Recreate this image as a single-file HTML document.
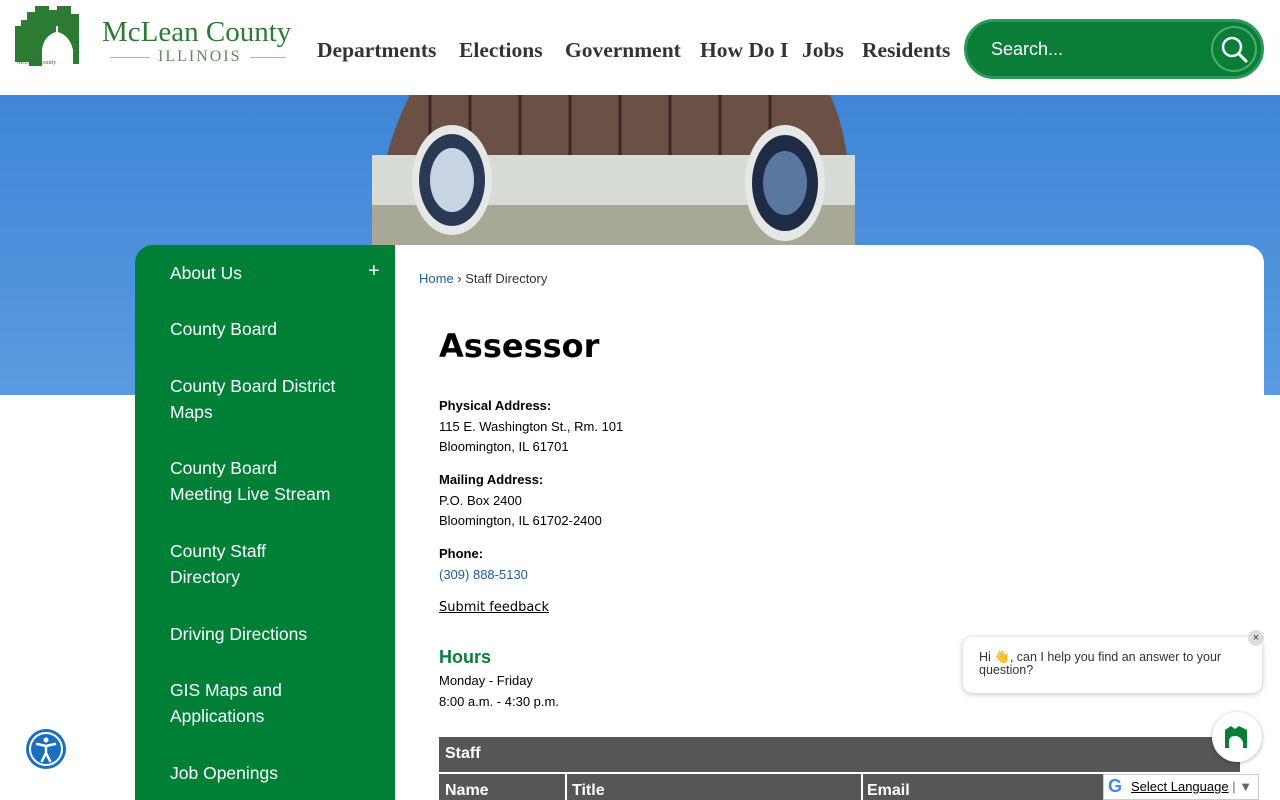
<!DOCTYPE html>
<html><head><meta charset="utf-8"><style>
*{margin:0;padding:0;box-sizing:border-box}
html,body{width:1280px;height:800px;overflow:hidden}
body{background:#fff;font-family:"Liberation Sans",sans-serif;position:relative}
.hdr{position:absolute;top:0;left:0;width:1280px;height:95px;background:#fff}
.nav{position:absolute;top:38px;left:317px;font-family:"Liberation Serif",serif;font-weight:bold;font-size:21.5px;color:#333;white-space:nowrap}
.nav span{position:absolute;top:0}
.search{position:absolute;left:964px;top:19px;width:300px;height:60px;border-radius:30px;background:#0a7d38;border:3px solid #2a9a55}
.search .t{position:absolute;left:24px;top:17px;color:#fff;font-size:18px}
.search .b{position:absolute;right:4px;top:4px;width:46px;height:46px;border-radius:50%;background:#0a7d38;border:2px solid #4caf70}
.hero{position:absolute;top:95px;left:0;width:1280px;height:300px;background:linear-gradient(180deg,#3f86d8,#5a9be0)}
.side{position:absolute;left:135px;top:245px;width:260px;height:560px;background:#008037;border-radius:18px 0 0 0;color:#fff;font-size:17.5px}
.side div{position:absolute;left:35px;line-height:26px}
.main{position:absolute;left:395px;top:245px;width:869px;height:560px;background:#fff;border-radius:0 18px 0 0}
.sm{font-size:13px;color:#000;line-height:20.5px}
a{color:#1a5fa0}
</style></head><body>
<div class="hdr">
<svg style="position:absolute;left:15px;top:6px" width="78" height="62" viewBox="0 0 78 62">
<path d="M0 20h6v-6h6v-8h8V0h14v4h8v-4h14v8h8v50h-6V44c-2-10-8-16-15-18v-6h-2v6c-8 2-14 10-14 20v14H14v-4H0z" fill="#2d7a33"/>
<text x="2" y="58" font-size="6" font-family="Liberation Serif" fill="#2d7a33">McLean County</text>
</svg>
<div style="position:absolute;left:102px;top:16px;font-family:'Liberation Serif',serif;font-size:29px;color:#2d7a33">McLean County</div>
<div style="position:absolute;left:110px;top:57px;width:176px;border-top:1px solid #9bb;"></div>
<div style="position:absolute;left:150px;top:48px;background:#fff;padding:0 8px;font-family:'Liberation Serif',serif;font-size:16px;letter-spacing:2px;color:#5b8c5f">ILLINOIS</div>
<div class="nav"><span style="left:0">Departments</span><span style="left:142px">Elections</span><span style="left:248px">Government</span><span style="left:383px">How Do I</span><span style="left:485px">Jobs</span><span style="left:545px">Residents</span></div>
<div class="search"><div class="t">Search...</div><div class="b"><svg width="42" height="42" viewBox="0 0 42 42"><circle cx="19" cy="19" r="9" fill="none" stroke="#fff" stroke-width="2.5"/><path d="M26 26l7 7" stroke="#fff" stroke-width="3" stroke-linecap="round"/></svg></div></div>
</div>
<div class="hero">
<svg width="1280" height="300" style="position:absolute;left:0;top:0">
<path d="M372 150C380 60 400 20 410 0H830C845 30 852 80 855 150z" fill="#6b5046"/>
<path d="M430 0v120M470 0v120M520 0v110M570 0v110M620 0v110M670 0v110M720 0v110M770 0v120" stroke="#3a2822" stroke-width="3"/>
<rect x="372" y="60" width="483" height="90" fill="#d8dcd6"/>
<rect x="372" y="110" width="483" height="40" fill="#a8a896"/>
<ellipse cx="452" cy="85" rx="40" ry="55" fill="#e5e8e4"/><ellipse cx="452" cy="85" rx="33" ry="46" fill="#2a3a55"/><ellipse cx="452" cy="85" rx="22" ry="32" fill="#c8d4e4"/>
<ellipse cx="785" cy="88" rx="40" ry="58" fill="#e5e8e4"/><ellipse cx="785" cy="88" rx="33" ry="48" fill="#1d2b44"/><ellipse cx="785" cy="88" rx="22" ry="32" fill="#5878a0"/>
</svg>
</div>
<div class="side">
<div style="top:15px">About Us</div><div style="top:13px;left:233px;font-size:20px">+</div>
<div style="top:71px">County Board</div>
<div style="top:128px">County Board District<br>Maps</div>
<div style="top:210px">County Board<br>Meeting Live Stream</div>
<div style="top:293px">County Staff<br>Directory</div>
<div style="top:376px">Driving Directions</div>
<div style="top:432px">GIS Maps and<br>Applications</div>
<div style="top:515px">Job Openings</div>
</div>
<div class="main">
<div style="position:absolute;left:24px;top:26px;font-size:13px;color:#333"><a style="text-decoration:none">Home</a> › Staff Directory</div>
<div style="position:absolute;left:44px;top:82px;font-family:'DejaVu Sans',sans-serif;font-weight:bold;font-size:32px;color:#000">Assessor</div>
<div class="sm" style="position:absolute;left:44px;top:151px"><b>Physical Address:</b><br>115 E. Washington St., Rm. 101<br>Bloomington, IL 61701</div>
<div class="sm" style="position:absolute;left:44px;top:225px"><b>Mailing Address:</b><br>P.O. Box 2400<br>Bloomington, IL 61702-2400</div>
<div class="sm" style="position:absolute;left:44px;top:299px"><b>Phone:</b><br><a>(309) 888-5130</a></div>
<div class="sm" style="position:absolute;left:44px;top:353px;font-family:'DejaVu Sans',sans-serif"><u>Submit feedback</u></div>
<div style="position:absolute;left:44px;top:402px;font-size:18px;font-weight:bold;color:#0a7d38">Hours</div>
<div class="sm" style="position:absolute;left:44px;top:426px">Monday - Friday<br>8:00 a.m. - 4:30 p.m.</div>
<div style="position:absolute;left:44px;top:492px;width:801px;height:70px;background:#555756;color:#fff;font-weight:bold;font-size:16px">
<div style="position:absolute;left:6px;top:8px">Staff</div>
<div style="position:absolute;left:0;top:35px;width:801px;border-top:2px solid #fff"></div>
<div style="position:absolute;left:126px;top:36px;height:40px;border-left:2px solid #fff"></div>
<div style="position:absolute;left:422px;top:36px;height:40px;border-left:2px solid #fff"></div>
<div style="position:absolute;left:6px;top:45px">Name</div><div style="position:absolute;left:133px;top:45px">Title</div><div style="position:absolute;left:428px;top:45px">Email</div>
</div>
</div>
<div style="position:absolute;left:963px;top:637px;width:299px;height:56px;background:#fff;border-radius:10px;box-shadow:0 1px 6px rgba(0,0,0,.25);font-size:12.5px;color:#333;padding:14px 16px;line-height:13px">Hi 👋, can I help you find an answer to your question?</div>
<div style="position:absolute;left:1248px;top:630px;width:16px;height:16px;border-radius:50%;background:#ddd;font-size:11px;text-align:center;line-height:16px;color:#333">×</div>
<div style="position:absolute;left:1212px;top:712px;width:50px;height:50px;border-radius:50%;background:#fff;box-shadow:0 1px 4px rgba(0,0,0,.3)"><svg width="50" height="50"><path d="M13 36V18l6-4 4 3 4-3 8 4v18h-4v-6c-2-4-4-6-8-6s-6 2-6 6v6z" fill="#0a7d38"/></svg></div>
<div style="position:absolute;left:1103px;top:774px;width:156px;height:26px;background:#fff;border:1px solid #ccc;font-size:13px;padding:4px 0 0 27px"><span style="position:absolute;left:4px;top:1px;font-weight:bold;font-size:18px;color:#4285f4">G</span><u>Select Language</u> <span style="color:#666">| ▼</span></div>
<div style="position:absolute;left:26px;top:729px;width:40px;height:40px;border-radius:50%;background:#1a6fc0"><svg width="40" height="40"><circle cx="20" cy="20" r="16" fill="none" stroke="#fff" stroke-width="2"/><circle cx="20" cy="11" r="2.5" fill="#fff"/><path d="M11 15l9 2 9-2M20 17v7l-4 8M20 24l4 8" stroke="#fff" stroke-width="2.5" fill="none" stroke-linecap="round"/></svg></div>
</body></html>
